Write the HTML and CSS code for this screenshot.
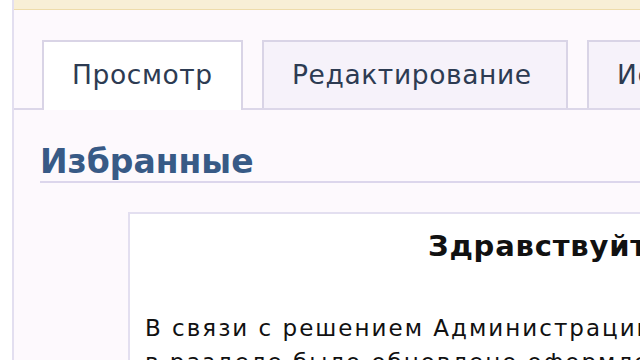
FILE: index.html
```html
<!DOCTYPE html>
<html lang="ru">
<head>
    <meta charset="UTF-8">
    <meta name="viewport" content="width=device-width, initial-scale=1.0">
    <title>Избранные</title>
    <link rel="stylesheet" href="styles.css">
</head>
<body>
    <div class="page">
        <div class="topbar"></div>

        <div class="tabs">
            <div class="tab tab-view active">Просмотр</div>
            <div class="tab tab-edit">Редактирование</div>
            <div class="tab">История</div>
        </div>

        <h1 class="title">Избранные</h1>

        <div class="content">
            <p class="greeting">Здравствуйте!</p>
            <p class="text">В связи с решением Администрации проекта<br>в разделе было обновлено оформление</p>
        </div>
    </div>
</body>
</html>
```

FILE: styles.css
```css
body {
    margin: 0;
    background-color: #ffffff;
    font-family: "DejaVu Sans", Verdana, sans-serif;
    overflow: hidden;
}

.page {
    margin-left: 12px;
    border-left: 2px solid #e3dff0;
    background-color: #fdf9fd;
    height: 360px;
    overflow: hidden;
}

.topbar {
    height: 9px;
    background-color: #f8efd6;
    border-bottom: 1px solid #eedcaa;
}

.tabs {
    display: flex;
    gap: 19px;
    margin-top: 30px;
    padding-left: 28px;
    border-bottom: 2px solid #dcd7e9;
    white-space: nowrap;
}

.tab {
    flex-shrink: 0;
    box-sizing: border-box;
    height: 68px;
    line-height: 66px;
    padding: 0 0 0 28px;
    border: 2px solid #d9d4e6;
    border-bottom: none;
    background-color: #f6f2fa;
    color: #2d3b52;
    font-size: 26.5px;
    letter-spacing: 0.6px;
}

.tab-view {
    width: 201px;
}

.tab-edit {
    width: 306px;
}

.tab.active {
    background-color: #ffffff;
    height: 70px;
    margin-bottom: -2px;
}

.title {
    margin: 33px 0 0 26px;
    padding-bottom: 1px;
    border-bottom: 2px solid #dcd6ec;
    color: #385a86;
    font-size: 33px;
    font-weight: bold;
    line-height: 37px;
}

.content {
    margin: 29px 0 0 114px;
    min-height: 200px;
    border-left: 2px solid #e3dff0;
    border-top: 2px solid #e3dff0;
    background-color: #ffffff;
    padding: 14px 0 0 15px;
    white-space: nowrap;
    color: #111111;
}

.greeting {
    margin: 0;
    padding-left: 283px;
    font-size: 29px;
    font-weight: bold;
    letter-spacing: 0.8px;
    line-height: 36px;
}

.text {
    margin: 47px 0 0 0;
    font-size: 23px;
    letter-spacing: 2px;
    line-height: 34px;
}
```
